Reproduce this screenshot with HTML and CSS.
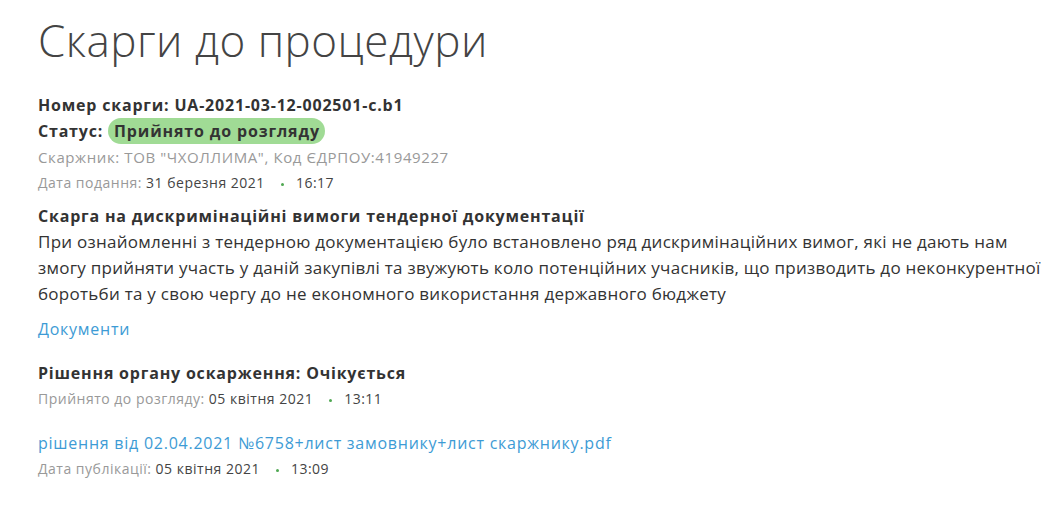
FILE: index.html
```html
<!DOCTYPE html>
<html lang="uk">
<head>
  <meta charset="UTF-8">
  <meta name="viewport" content="width=device-width, initial-scale=1.0">
  <title>Скарги до процедури</title>
  <link rel="stylesheet" href="styles.css">
</head>
<body>
  <div class="page">
    <h1 class="title">Скарги до процедури</h1>

    <div class="complaint">
      <div class="strong-line">Номер скарги: UA-2021-03-12-002501-c.b1</div>
      <div class="strong-line">Статус: <span class="badge">Прийнято до розгляду</span></div>
      <div class="meta author">Скаржник: ТОВ "ЧХОЛЛИМА", Код ЄДРПОУ:41949227</div>
      <div class="meta">Дата подання: <span class="val">31 березня 2021</span><span class="dot"></span><span class="val">16:17</span></div>

      <div class="strong-line subject">Скарга на дискримінаційні вимоги тендерної документації</div>
      <p class="text">При ознайомленні з тендерною документацією було встановлено ряд дискримінаційних вимог, які не дають нам змогу прийняти участь у даній закупівлі та звужують коло потенційних учасників, що призводить до неконкурентної боротьби та у свою чергу до не економного використання державного бюджету</p>

      <a class="link docs" href="#">Документи</a>

      <div class="strong-line decision">Рішення органу оскарження: Очікується</div>
      <div class="meta">Прийнято до розгляду: <span class="val">05 квітня 2021</span><span class="dot"></span><span class="val">13:11</span></div>

      <a class="link file" href="#">рішення від 02.04.2021 №6758+лист замовнику+лист скаржнику.pdf</a>
      <div class="meta">Дата публікації: <span class="val">05 квітня 2021</span><span class="dot"></span><span class="val">13:09</span></div>
    </div>
  </div>
</body>
</html>
```

FILE: styles.css
```css
body {
  margin: 0;
  font-family: 'Open Sans', sans-serif;
  color: #333;
  background: #fff;
}
.page {
  padding: 10px 4px 20px 38px;
}
.title {
  font-size: 44px;
  font-weight: 300;
  color: #444;
  letter-spacing: 0.5px;
  margin: 0 0 22px;
  line-height: 60px;
}
.complaint {
  display: flex;
  flex-direction: column;
  align-items: flex-start;
}
.strong-line {
  font-size: 16px;
  font-weight: 700;
  line-height: 26px;
  letter-spacing: 0.8px;
}
.badge {
  display: inline-block;
  background: #a0db95;
  border-radius: 13px;
  padding: 0 5px 0 6px;
  line-height: 26px;
  letter-spacing: 0.85px;
}
.meta {
  font-size: 14px;
  color: #999;
  line-height: 26px;
  letter-spacing: 0.5px;
}
.author {
  font-size: 15px;
  letter-spacing: 0.6px;
}
.meta .val {
  color: #444;
}
.dot {
  display: inline-block;
  width: 3px;
  height: 3px;
  background: #4fa852;
  border-radius: 50%;
  margin: 0 12px 0 16px;
  vertical-align: middle;
}
.subject {
  margin-top: 7px;
}
.text {
  font-size: 17px;
  line-height: 26px;
  letter-spacing: 0.26px;
  margin: 0;
}
.link {
  color: #3d9bd5;
  text-decoration: none;
  font-size: 16px;
  line-height: 26px;
  letter-spacing: 0.75px;
}
.docs {
  margin-top: 9px;
}
.decision {
  margin-top: 18px;
}
.file {
  margin-top: 18px;
}
```
